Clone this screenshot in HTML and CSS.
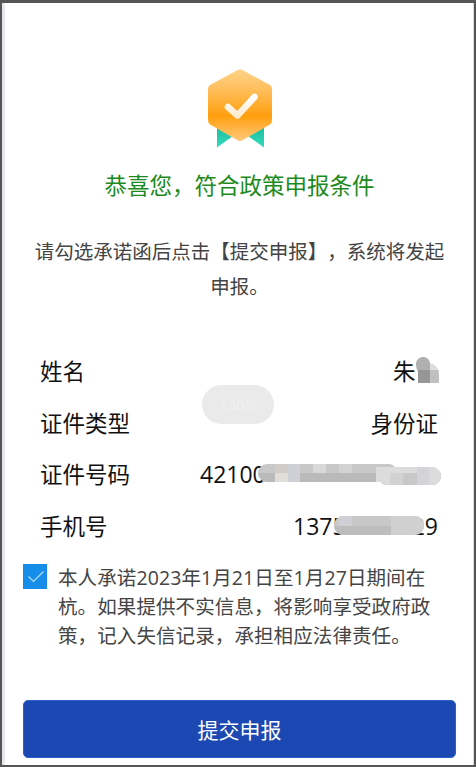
FILE: index.html
```html
<!DOCTYPE html>
<html lang="zh-CN">
<head>
    <meta charset="UTF-8">
    <meta name="viewport" content="width=device-width, initial-scale=1.0">
    <title>政策申报</title>
    <link rel="stylesheet" href="styles.css">
</head>
<body>

<div class="dialog">
    <svg class="badge" width="68" height="80" viewBox="0 0 68 80">
        <defs>
            <linearGradient id="gold" x1="0" y1="0" x2="0" y2="1">
                <stop offset="0" stop-color="#ffd28a"/>
                <stop offset="0.3" stop-color="#ffbd58"/>
                <stop offset="0.65" stop-color="#ff9f0e"/>
                <stop offset="1" stop-color="#ffc97c"/>
            </linearGradient>
            <linearGradient id="ribbon" x1="0" y1="0" x2="0" y2="1">
                <stop offset="0" stop-color="#16b99c"/>
                <stop offset="1" stop-color="#35dcbc"/>
            </linearGradient>
            <linearGradient id="tick" x1="0" y1="0" x2="0" y2="1">
                <stop offset="0" stop-color="#ffffff"/>
                <stop offset="1" stop-color="#ffead0"/>
            </linearGradient>
        </defs>
        <path d="M11 56V78.500L27 67Z M58 56V78.500L42 67Z" fill="url(#ribbon)"/>
        <path d="M32 .8Q34 0 36 .8L64 16Q66 17.500 66 20V51Q66 54 64 55.500L36 71.500Q34 72.500 32 71.500L4 55.500Q2 54 2 51V20Q2 17.500 4 16Z" fill="url(#gold)"/>
        <path d="M22 38L31.500 46.500L48.500 28" fill="none" stroke="url(#tick)" stroke-width="6.500" stroke-linecap="round" stroke-linejoin="round"/>
    </svg>
    <h2>恭喜您，符合政策申报条件</h2>
    <p class="tip">请勾选承诺函后点击【提交申报】，系统将发起申报。</p>

    <div class="info">
        <div class="row"><span>姓名</span><span class="value name">朱<svg class="mask" width="24" height="27" viewBox="0 0 24 27">
            <clipPath id="nameClip"><path d="M1 8a7 7 0 0 1 14-2q9 2 9 12v8H3V14Q1 12 1 8Z"/></clipPath>
            <g clip-path="url(#nameClip)">
                <path d="M0 0h15v13H0z" fill="#b0b0b0"/>
                <path d="M15 0h9v13h-9z" fill="#dedede"/>
                <path d="M0 13h15v14H0z" fill="#969696"/>
                <path d="M15 13h9v14h-9z" fill="#c0c0c2"/>
            </g>
        </svg></span></div>
        <div class="row"><span>证件类型</span><span class="value">身份证</span></div>
        <div class="row"><span>证件号码</span><span class="value num id-card">42100<svg class="mask" width="184" height="22" viewBox="0 0 184 22">
            <clipPath id="idClip"><path d="M9 0H130a8 8 0 0 1 7 3H174a9 9 0 0 1 0 18H130q-6 0-7-3H9a9 9 0 0 1 0-18Z"/></clipPath>
            <g clip-path="url(#idClip)">
                <path d="M0 0h184v22H0z" fill="#c8c8c8"/>
                <path d="M0 9h184v13H0z" fill="#bababa"/>
                <path d="M17 0h13v9H17z" fill="#d0cac9"/>
                <path d="M17 9h13v9H17z" fill="#e1ddd9"/>
                <path d="M30 0h12v19H30z" fill="#cfd0d6"/>
                <path d="M55 0h13v9H55z" fill="#d9d9d9"/>
                <path d="M81 0h13v9H81z" fill="#d2d2d2"/>
                <path d="M118 3h66v19h-66z" fill="#dcdcdc"/>
                <path d="M132 9h13v13h-13z" fill="#d2d2d2"/>
                <path d="M145 9h14v13h-14z" fill="#c8c8c8"/>
                <path d="M159 3h12v19h-12z" fill="#d4d4d8"/>
            </g>
        </svg></span></div>
        <div class="row"><span>手机号</span><span class="value num">1375<svg class="mask" width="90" height="19" viewBox="0 0 90 19">
            <clipPath id="phoneClip"><rect width="90" height="19" rx="9"/></clipPath>
            <g clip-path="url(#phoneClip)">
                <path d="M0 0h90v10H0z" fill="#c8c8c8"/>
                <path d="M0 10h90v9H0z" fill="#bdbdbd"/>
                <path d="M5 0h13v10H5z" fill="#cfd0d5"/>
                <path d="M57 0h33v19H57z" fill="#d0d0d0"/>
            </g>
        </svg><span class="tail">29</span></span></div>
    </div>

    <label class="agree">
        <svg class="checkbox" width="24" height="25" viewBox="0 0 24 25">
            <rect width="24" height="25" fill="#168de8"/>
            <path d="M5.500 12.500L10.500 17.500L20.500 7.500" fill="none" stroke="#b5dcf9" stroke-width="1.200"/>
        </svg>
        <span>本人承诺2023年1月21日至1月27日期间在杭。如果提供不实信息，将影响享受政府政策，记入失信记录，承担相应法律责任。</span>
    </label>
    <button class="button">提交申报</button>
    <div class="toast">130%</div>
</div>

</body>
</html>
```

FILE: styles.css
```css
* {
    box-sizing: border-box;
}
body {
    margin: 0;
    height: 767px;
    padding: 3px 2px 2px;
    background-color: #555;
    font-family: "Open Sans", "Noto Sans CJK SC", sans-serif;
    text-spacing-trim: space-all;
    overflow: hidden;
}
.dialog {
    position: relative;
    display: flex;
    flex-direction: column;
    height: 762px;
    padding: 66px 17px 0 18px;
    background-color: #fff;
    border-left: 3px solid #e8e8ec;
    border-right: 1px solid #ddd;
}
.badge {
    align-self: center;
    flex: none;
}
h2 {
    margin: 20px 0 0;
    color: #1c8a20;
    font-size: 22.5px;
    font-weight: 400;
    line-height: 34px;
    text-align: center;
}
.tip {
    margin: 31px 10px 0;
    color: #444;
    font-size: 19.5px;
    line-height: 35px;
    text-align: center;
}
.info {
    margin: 42px 18px 0 17px;
    color: #111;
    font-size: 22.5px;
}
.row {
    display: flex;
    justify-content: space-between;
    height: 51.5px;
    line-height: 51.5px;
}
.value {
    position: relative;
}
.name {
    width: 45px;
}
.num {
    width: 145px;
    font-size: 23px;
}
.id-card {
    width: 238px;
}
.tail {
    position: absolute;
    right: 0;
}
.mask {
    position: absolute;
    top: 15px;
    right: 14px;
    z-index: 1;
}
.name .mask {
    top: 11px;
    right: -1px;
}
.id-card .mask {
    right: -4px;
}
.agree {
    display: flex;
    align-items: flex-start;
    gap: 11px;
    height: 88px;
    margin-top: 11px;
    color: #444;
    font-size: 19.5px;
    letter-spacing: 0.1px;
    line-height: 29px;
}
.checkbox {
    flex: none;
    margin-top: 1px;
}
.button {
    height: 58px;
    margin-top: 49px;
    background-color: #1b48b2;
    color: white;
    font-family: inherit;
    font-size: 21px;
    border: 1px solid #2862c8;
    border-radius: 5px;
}
.toast {
    position: absolute;
    top: 382px;
    left: 197px;
    width: 72px;
    height: 39px;
    background-color: #eaeaea;
    border-radius: 20px;
    color: #f1f1f1;
    font-size: 15px;
    line-height: 39px;
    text-align: center;
}
```
